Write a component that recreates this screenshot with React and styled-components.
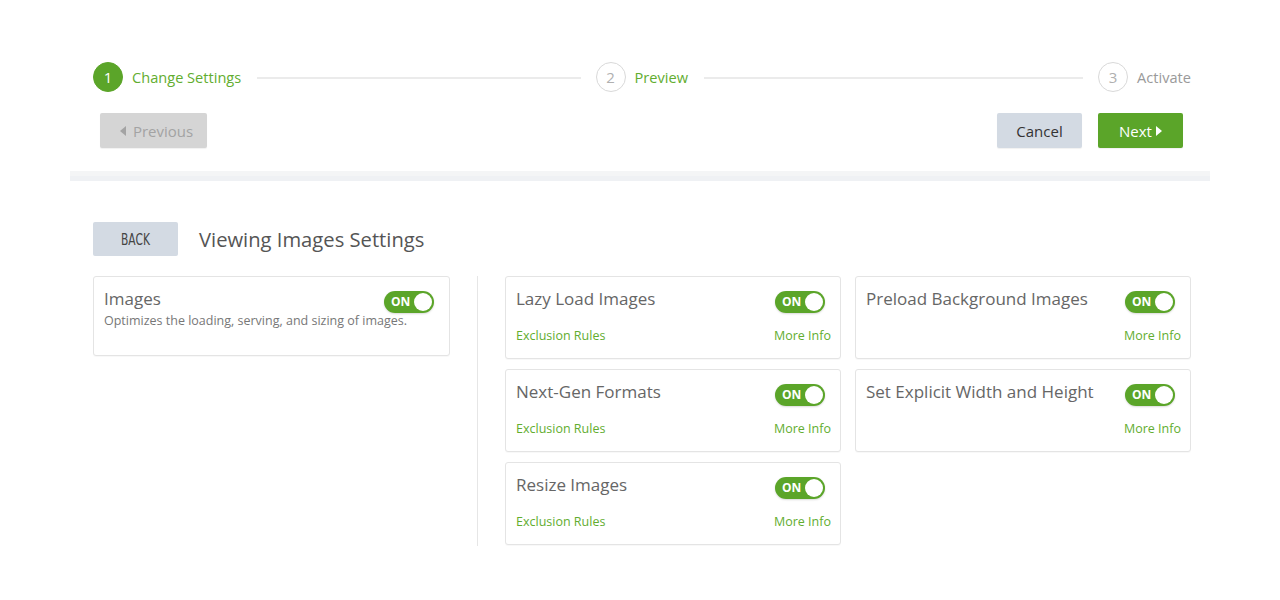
import React from "react";
import styled, { createGlobalStyle } from "styled-components";

const GREEN = "#5ba529";
const LINK = "#62ad2f";

const Global = createGlobalStyle`
  html, body { margin: 0; padding: 0; background: #fff; }
  body { font-family: "Open Sans", "Noto Sans", sans-serif; color: #555; }
  * { box-sizing: border-box; }
`;

const Page = styled.div`
  width: 1140px;
  margin-left: 70px;
  padding-top: 62px;
`;

const Inner = styled.div`
  padding: 0 19px 0 23px;
`;

const Steps = styled.div`
  display: flex;
  align-items: center;
  height: 30px;
`;

const Segment = styled.div`
  display: flex;
  align-items: center;
  flex: ${(p) => (p.$last ? "0 0 auto" : "1 1 0")};
`;

const Step = styled.div`
  display: flex;
  align-items: center;
  gap: 9px;
  font-size: 14.6px;
  color: ${(p) => (p.$muted ? "#9a9a9a" : "#62ad2f")};
  white-space: nowrap;
`;

const Circle = styled.div`
  width: 30px;
  height: 30px;
  border-radius: 50%;
  display: flex;
  align-items: center;
  justify-content: center;
  font-size: 15px;
  background: ${(p) => (p.$active ? GREEN : "#fff")};
  border: 1px solid ${(p) => (p.$active ? GREEN : "#d9d9d9")};
  color: ${(p) => (p.$active ? "#fff" : "#b0b0b0")};
`;

const StepLine = styled.div`
  flex: 1;
  height: 2px;
  background: #ebebeb;
  margin: 1px 15px 0 16px;
`;

const NavRow = styled.div`
  display: flex;
  align-items: center;
  margin-top: 21px;
  padding: 0 8px 0 7px;
  gap: 16px;
`;

const Btn = styled.button`
  height: 35px;
  width: ${(p) => p.$w}px;
  border: none;
  border-radius: 2px;
  font-family: "Open Sans", sans-serif;
  font-size: 15px;
  display: flex;
  align-items: center;
  justify-content: center;
  gap: ${(p) => p.$gap || 0}px;
  padding: ${(p) => p.$pad || "0"};
  cursor: pointer;
  background: ${(p) => p.$bg};
  color: ${(p) => p.$fg};
  box-shadow: 0 1px 1px rgba(0, 0, 0, 0.06);
`;

const Spacer = styled.div`
  flex: 1;
`;

const Divider = styled.div`
  height: 10px;
  margin-top: 23px;
  background: linear-gradient(#f4f5f6 0 50%, #eff1f4 50% 100%);
`;

const HeadRow = styled.div`
  display: flex;
  align-items: center;
  gap: 21px;
  margin-top: 41px;
`;

const BackBtn = styled.button`
  width: 85px;
  height: 34px;
  border: none;
  border-radius: 2px;
  background: #d3dae3;
  color: #444;
  font-family: "DejaVu Sans Condensed", "Roboto", sans-serif;
  font-size: 16px;
  padding: 0;
  display: flex;
  align-items: center;
  justify-content: center;
`;

const BackText = styled.span`
  display: inline-block;
  transform: scaleX(0.74);
`;

const PageTitle = styled.div`
  font-size: 20.2px;
  color: #555;
`;

const Body = styled.div`
  display: flex;
  margin-top: 20px;
  align-items: stretch;
`;

const LeftCol = styled.div`
  width: 357px;
`;

const VLine = styled.div`
  width: 1px;
  background: #e6e6e6;
  margin: 0 27px;
  min-height: 270px;
`;

const Grid = styled.div`
  display: grid;
  grid-template-columns: 336px 336px;
  column-gap: 14px;
  row-gap: 10px;
  align-content: start;
`;

const Card = styled.div`
  border: 1px solid #e4e4e4;
  border-radius: 3px;
  background: #fff;
  padding: 10px 9px 12px 10px;
  min-height: ${(p) => p.$h || 83}px;
  box-shadow: 0 1px 1px rgba(0, 0, 0, 0.03);
`;

const CardHead = styled.div`
  display: flex;
  align-items: center;
  justify-content: space-between;
  height: 26px;
`;

const CardTitle = styled.div`
  font-size: 17px;
  color: #666;
  margin-bottom: 4px;
`;

const Desc = styled.div`
  font-size: 12.5px;
  color: #777;
  line-height: 18px;
  margin-top: -1px;
`;

const Toggle = styled.div`
  width: 50px;
  height: 22px;
  border-radius: 11px;
  background: ${GREEN};
  display: flex;
  align-items: center;
  justify-content: space-between;
  padding: 0 2px 0 7px;
  margin-right: 6px;
  margin-top: 3px;
  box-shadow: 0 1px 2px rgba(0, 0, 0, 0.15);
  color: #fff;
  font-size: 12px;
  font-weight: 700;
`;

const Knob = styled.div`
  width: 18px;
  height: 18px;
  border-radius: 50%;
  background: #fff;
`;

const Links = styled.div`
  display: flex;
  justify-content: ${(p) => (p.$right ? "flex-end" : "space-between")};
  margin-top: 14px;
  font-size: 12.5px;
  line-height: 18px;
`;

const Link = styled.a`
  color: ${LINK};
  text-decoration: none;
`;

const Caret = ({ dir }) => (
  <svg width="6" height="10" viewBox="0 0 6 10">
    {dir === "left" ? (
      <polygon points="6,0 6,10 0,5" fill="currentColor" />
    ) : (
      <polygon points="0,0 0,10 6,5" fill="currentColor" />
    )}
  </svg>
);

const Switch = () => (
  <Toggle>
    ON
    <Knob />
  </Toggle>
);

const features = [
  { title: "Lazy Load Images", excl: true },
  { title: "Preload Background Images", excl: false },
  { title: "Next-Gen Formats", excl: true },
  { title: "Set Explicit Width and Height", excl: false },
  { title: "Resize Images", excl: true },
];

export default function App() {
  return (
    <>
      <Global />
      <Page>
        <Inner>
          <Steps>
            <Segment>
              <Step>
                <Circle $active>1</Circle>
                Change Settings
              </Step>
              <StepLine />
            </Segment>
            <Segment>
              <Step>
                <Circle>2</Circle>
                Preview
              </Step>
              <StepLine />
            </Segment>
            <Segment $last>
              <Step $muted>
                <Circle>3</Circle>
                Activate
              </Step>
            </Segment>
          </Steps>
          <NavRow>
            <Btn $w={107} $bg="#d5d5d5" $fg="#a3a3a3" $gap={7} $pad="0 0 0 6px">
              <Caret dir="left" />
              Previous
            </Btn>
            <Spacer />
            <Btn $w={85} $bg="#d3dae3" $fg="#333">
              Cancel
            </Btn>
            <Btn $w={85} $bg={GREEN} $fg="#fff" $gap={4}>
              Next
              <Caret dir="right" />
            </Btn>
          </NavRow>
        </Inner>
        <Divider />
        <Inner>
          <HeadRow>
            <BackBtn>
              <BackText>BACK</BackText>
            </BackBtn>
            <PageTitle>Viewing Images Settings</PageTitle>
          </HeadRow>
          <Body>
            <LeftCol>
              <Card $h={80}>
                <CardHead>
                  <CardTitle>Images</CardTitle>
                  <Switch />
                </CardHead>
                <Desc>Optimizes the loading, serving, and sizing of images.</Desc>
              </Card>
            </LeftCol>
            <VLine />
            <Grid>
              {features.map((f) => (
                <Card key={f.title}>
                  <CardHead>
                    <CardTitle>{f.title}</CardTitle>
                    <Switch />
                  </CardHead>
                  <Links $right={!f.excl}>
                    {f.excl && <Link>Exclusion Rules</Link>}
                    <Link>More Info</Link>
                  </Links>
                </Card>
              ))}
            </Grid>
          </Body>
        </Inner>
      </Page>
    </>
  );
}
